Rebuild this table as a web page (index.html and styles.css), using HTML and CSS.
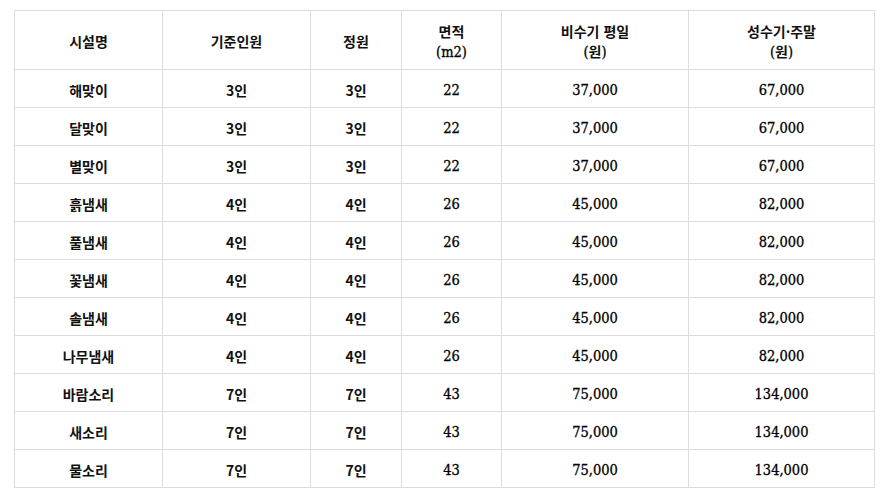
FILE: index.html
```html
<!DOCTYPE html>
<html lang="ko">
<head>
<meta charset="utf-8">
<link rel="stylesheet" href="styles.css">
</head>
<body>
<table class="rates">
  <colgroup>
    <col class="c1"><col class="c2"><col class="c3"><col class="c4"><col class="c5"><col class="c6">
  </colgroup>
  <thead>
    <tr>
      <th>시설명</th>
      <th>기준인원</th>
      <th>정원</th>
      <th>면적<br><span class="num">(m2)</span></th>
      <th>비수기 평일<br><span class="num">(</span>원<span class="num">)</span></th>
      <th>성수기·주말<br><span class="num">(</span>원<span class="num">)</span></th>
    </tr>
  </thead>
  <tbody>
    <tr><td>해맞이</td><td>3인</td><td>3인</td><td class="num">22</td><td class="num">37,000</td><td class="num">67,000</td></tr>
    <tr><td>달맞이</td><td>3인</td><td>3인</td><td class="num">22</td><td class="num">37,000</td><td class="num">67,000</td></tr>
    <tr><td>별맞이</td><td>3인</td><td>3인</td><td class="num">22</td><td class="num">37,000</td><td class="num">67,000</td></tr>
    <tr><td>흙냄새</td><td>4인</td><td>4인</td><td class="num">26</td><td class="num">45,000</td><td class="num">82,000</td></tr>
    <tr><td>풀냄새</td><td>4인</td><td>4인</td><td class="num">26</td><td class="num">45,000</td><td class="num">82,000</td></tr>
    <tr><td>꽃냄새</td><td>4인</td><td>4인</td><td class="num">26</td><td class="num">45,000</td><td class="num">82,000</td></tr>
    <tr><td>솔냄새</td><td>4인</td><td>4인</td><td class="num">26</td><td class="num">45,000</td><td class="num">82,000</td></tr>
    <tr><td>나무냄새</td><td>4인</td><td>4인</td><td class="num">26</td><td class="num">45,000</td><td class="num">82,000</td></tr>
    <tr><td>바람소리</td><td>7인</td><td>7인</td><td class="num">43</td><td class="num">75,000</td><td class="num">134,000</td></tr>
    <tr><td>새소리</td><td>7인</td><td>7인</td><td class="num">43</td><td class="num">75,000</td><td class="num">134,000</td></tr>
    <tr><td>물소리</td><td>7인</td><td>7인</td><td class="num">43</td><td class="num">75,000</td><td class="num">134,000</td></tr>
  </tbody>
</table>
</body>
</html>
```
FILE: styles.css
```css
html, body {
  margin: 0;
  padding: 0;
  background: #fff;
}
body {
  padding: 10px 0 0 14px;
}
.rates {
  border-collapse: collapse;
  table-layout: fixed;
  width: 860px;
  font-family: "Noto Sans CJK KR", "Noto Sans", sans-serif;
  font-size: 14px;
  font-weight: 700;
  color: #111;
}
.c1 { width: 148px; }
.c2 { width: 148px; }
.c3 { width: 91px; }
.c4 { width: 100px; }
.c5 { width: 187px; }
.c6 { width: 186px; }
.rates th,
.rates td {
  border: 1px solid #dcdcdc;
  text-align: center;
  vertical-align: middle;
  padding: 2px 0 0 0;
}
.rates th {
  height: 56px;
  line-height: 20px;
  font-weight: 700;
}
.rates td {
  height: 35px;
  line-height: 20px;
}
.num {
  font-family: "DejaVu Serif Condensed", "DejaVu Serif", serif;
  font-stretch: condensed;
  font-size: 14.5px;
  font-weight: 400;
  color: #000;
  -webkit-text-stroke: 0.3px #000;
}
```
